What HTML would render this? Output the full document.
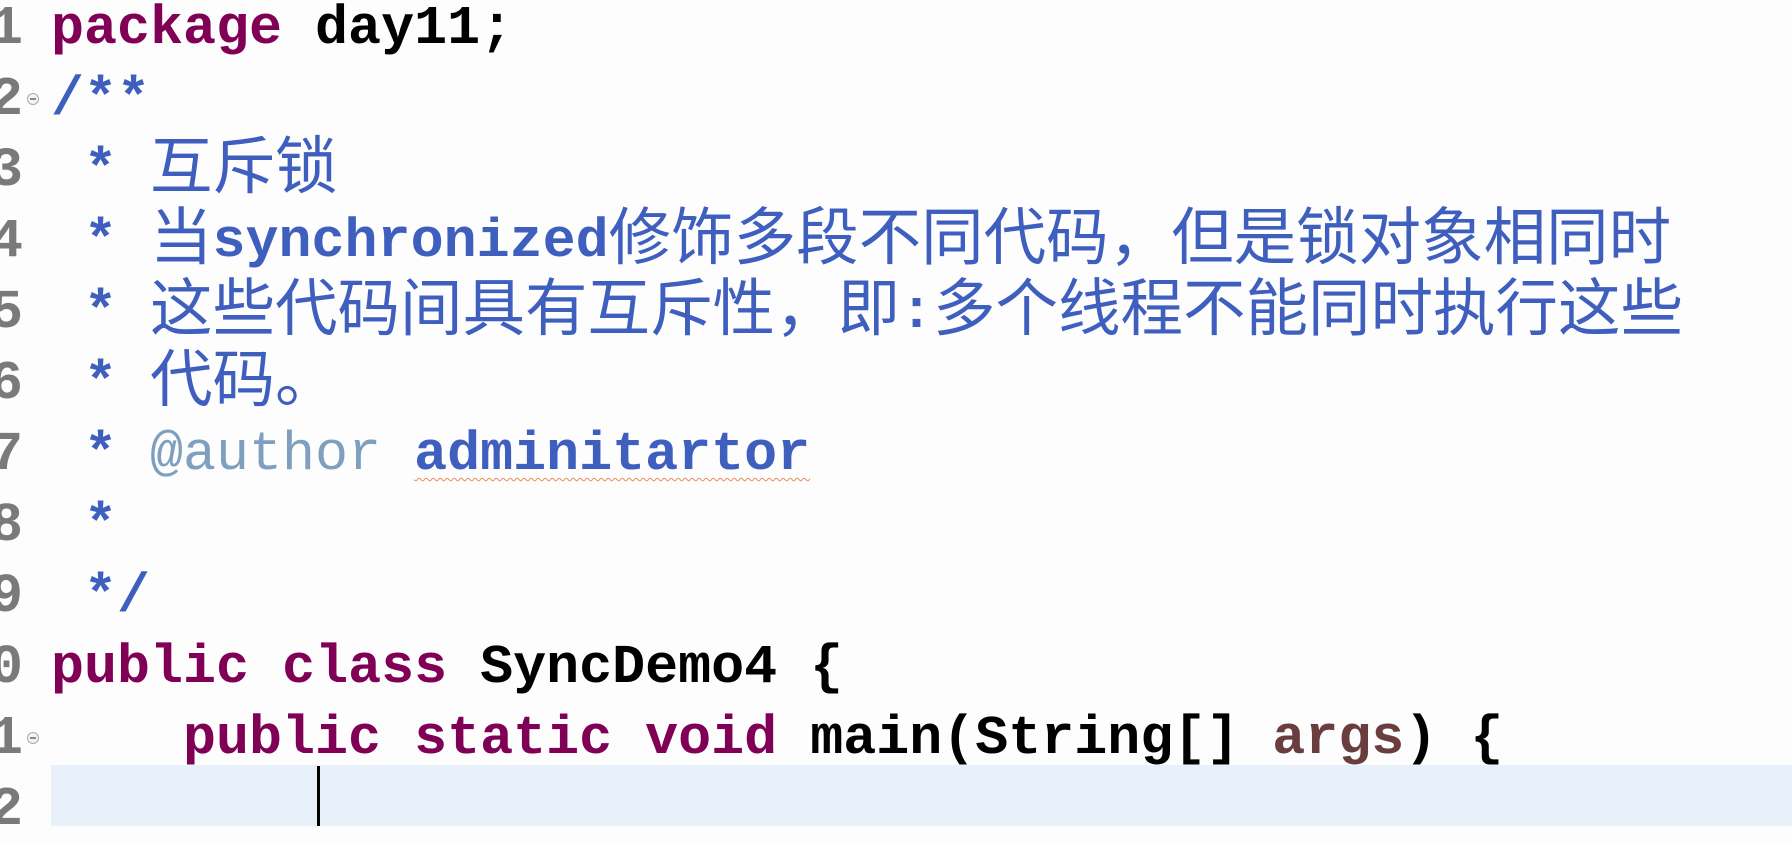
<!DOCTYPE html>
<html><head><meta charset="utf-8"><style>
html,body{margin:0;padding:0;width:1792px;height:826px;overflow:hidden;background:#fdfdfd;}
#ed{position:absolute;left:0;top:-7px;width:1792px;}
.ln{position:relative;height:71px;line-height:71px;font-family:"Liberation Mono",monospace;font-size:55px;white-space:pre;}
.num{position:absolute;right:1769px;top:0;color:#7a7a7a;font-weight:bold;}
.code{position:absolute;left:51px;top:0;color:#000;font-weight:bold;}
.k{color:#7f0055;}
.c{color:#3f5fbf;}
.t{color:#7f9fbf;font-weight:normal;}
.a{color:#6a3e3e;}
.cj{font-family:"Noto Sans CJK SC","WenQuanYi Zen Hei",sans-serif;font-size:62.5px;line-height:0;font-weight:normal;color:#3f5fbf;position:relative;top:3px;}
.w{text-decoration:underline wavy #e8875a;text-decoration-thickness:1px;text-underline-offset:8px;}
.fold{position:absolute;left:27px;top:29px;width:10px;height:10px;border:1px solid #aaa;border-radius:50%;background:#f4f4f4;}
.fold:after{content:"";position:absolute;left:2px;top:4px;width:6px;height:2px;background:#888;}
#hl{position:absolute;left:51px;top:765px;width:1741px;height:61px;background:#e8f0fa;}
#cur{position:absolute;left:317px;top:766px;width:3px;height:60px;background:#000;}
</style></head><body>
<div id="hl"></div><div id="cur"></div>
<div id="ed">
<div class="ln"><span class="num">1</span><span class="code"><span class="k">package</span> day11;</span></div>
<div class="ln"><span class="num">2</span><span class="fold"></span><span class="code c">/**</span></div>
<div class="ln"><span class="num">3</span><span class="code c"> * <span class="cj">互斥锁</span></span></div>
<div class="ln"><span class="num">4</span><span class="code c"> * <span class="cj">当</span>synchronized<span class="cj">修饰多段不同代码，但是锁对象相同时</span></span></div>
<div class="ln"><span class="num">5</span><span class="code c"> * <span class="cj">这些代码间具有互斥性，即</span>:<span class="cj">多个线程不能同时执行这些</span></span></div>
<div class="ln"><span class="num">6</span><span class="code c"> * <span class="cj">代码。</span></span></div>
<div class="ln"><span class="num">7</span><span class="code c"> * <span class="t">@author</span> <span class="w">adminitartor</span></span></div>
<div class="ln"><span class="num">8</span><span class="code c"> *</span></div>
<div class="ln"><span class="num">9</span><span class="code c"> */</span></div>
<div class="ln"><span class="num">10</span><span class="code"><span class="k">public</span> <span class="k">class</span> SyncDemo4 {</span></div>
<div class="ln"><span class="num">11</span><span class="fold"></span><span class="code">    <span class="k">public</span> <span class="k">static</span> <span class="k">void</span> main(String[] <span class="a">args</span>) {</span></div>
<div class="ln"><span class="num">12</span><span class="code"></span></div>
</div>
</body></html>
